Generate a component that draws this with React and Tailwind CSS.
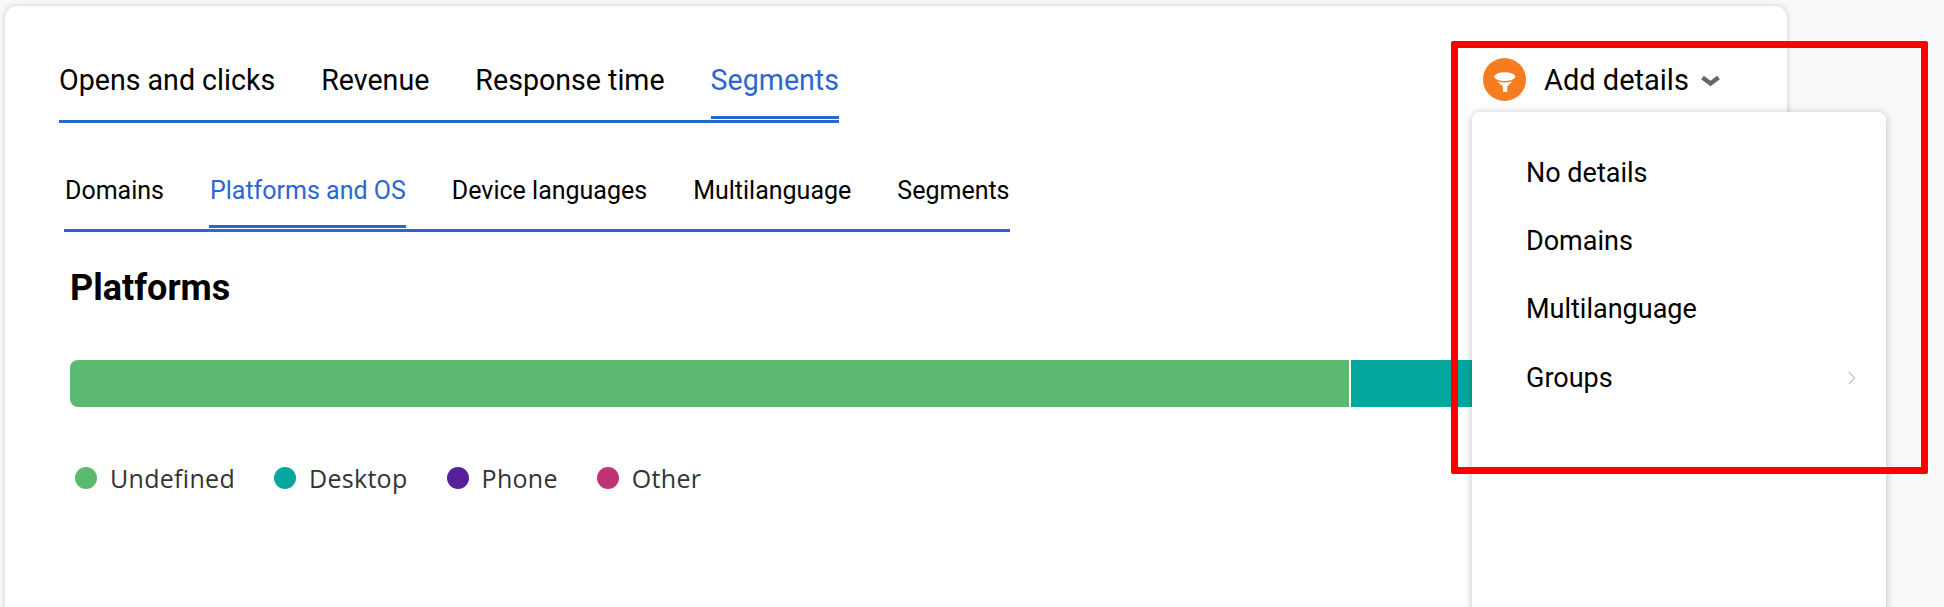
import React from 'react';
import { ChevronRight } from 'lucide-react';

const mainTabs = ['Opens and clicks', 'Revenue', 'Response time', 'Segments'];
const subTabs = ['Domains', 'Platforms and OS', 'Device languages', 'Multilanguage', 'Segments'];
const legend = [
  { label: 'Undefined', color: 'bg-[#5cb970]' },
  { label: 'Desktop', color: 'bg-[#04a79d]' },
  { label: 'Phone', color: 'bg-[#57209b]' },
  { label: 'Other', color: 'bg-[#c23373]' },
];
const menuItems = ['No details', 'Domains', 'Multilanguage', 'Groups'];

const FunnelIcon = () => (
  <svg width="43" height="43" viewBox="0 0 43 43" className="shrink-0">
    <circle cx="21.5" cy="21.5" r="21.5" fill="#f57c20" />
    <ellipse cx="21.8" cy="18.6" rx="10.5" ry="4.3" fill="#fff" />
    <path d="M14 23.2 Q21.8 25.8 29.6 23.2 L24.4 28.2 L24.2 34 L20 34 L19.8 28.2 Z" fill="#fff" />
  </svg>
);

const SmallChevron = () => (
  <svg width="19" height="12" viewBox="0 0 19 12" className="shrink-0">
    <path d="M1.5 2.5 L9.5 8.5 L17.5 2.5" fill="none" stroke="#666" strokeWidth="4.5" />
  </svg>
);

export default function App() {
  return (
    <div className="relative h-[607px] overflow-hidden bg-[#f9f9f9] font-['Roboto',sans-serif] text-black">
      <div className="relative ml-[5px] mt-[6px] h-[640px] w-[1782px] rounded-xl bg-white pl-[54px] pt-[51px] shadow-[0_0_6px_rgba(0,0,0,0.18)]">
        {/* Main tabs */}
        <nav className="inline-flex gap-[46px] border-b-[3px] border-[#2b66d1] text-[28.6px] leading-[46px]">
          {mainTabs.map((tab) => (
            <div key={tab} className={tab === 'Segments' ? 'relative h-[63px] text-[#2b66d1]' : 'h-[63px]'}>
              {tab}
              {tab === 'Segments' && <div className="absolute inset-x-0 bottom-[1px] h-[3px] bg-[#2b66d1]" />}
            </div>
          ))}
        </nav>

        {/* Sub tabs */}
        <div className="mt-[45px] pl-[5px]">
          <nav className="inline-flex gap-[45px] border-b-[3px] border-[#2b66d1] text-[25px] leading-[46px]">
            {subTabs.map((tab, i) => (
              <div key={i} className={i === 1 ? 'relative h-[61px] text-[#2b66d1]' : 'h-[61px]'}>
                <span className="pl-px">{tab}</span>
                {i === 1 && <div className="absolute inset-x-0 bottom-[1px] h-[3px] bg-[#2b66d1]" />}
              </div>
            ))}
          </nav>
        </div>

        {/* Platforms */}
        <h2 className="mt-[33px] pl-[11px] text-[36px] font-bold leading-[46px]">Platforms</h2>

        <div className="ml-[11px] mt-[49px] flex h-[47px] w-[1600px] gap-[2px] overflow-hidden rounded-l-lg">
          <div className="w-[1279px] bg-[#5cb970]" />
          <div className="flex-1 bg-[#04a79d]" />
        </div>

        <div className="ml-[16px] mt-[59px] flex items-center font-['Open_Sans',sans-serif] text-[25px] leading-[24px] tracking-[0.3px] text-[#333]">
          {legend.map((item) => (
            <div key={item.label} className="mr-[39px] flex items-center gap-[13px]">
              <span className={`h-[22px] w-[22px] rounded-full ${item.color}`} />
              <span>{item.label}</span>
            </div>
          ))}
        </div>

        {/* Add details dropdown trigger */}
        <div className="absolute left-[1478px] top-[52px] flex items-center">
          <FunnelIcon />
          <span className="ml-[18px] text-[29px] leading-[36px]">Add details</span>
          <span className="ml-[12px] mt-[3px]"><SmallChevron /></span>
        </div>

        {/* Dropdown menu */}
        <div className="absolute left-[1467px] top-[106px] h-[540px] w-[414px] rounded-lg bg-white pl-[54px] pr-[23px] pt-[27px] text-[27px] shadow-[0_1px_8px_rgba(0,0,0,0.25)]">
          {menuItems.map((item) => (
            <div key={item} className="flex h-[68.3px] items-center justify-between">
              <span>{item}</span>
              {item === 'Groups' && <ChevronRight className="h-[22px] w-[22px] text-[#c8c8c8]" strokeWidth={1.5} />}
            </div>
          ))}
        </div>
      </div>

      {/* Red highlight rectangle */}
      <div className="absolute left-[1451px] top-[41px] h-[433px] w-[477px] rounded-[2px] border-[7px] border-[#ff0000]" />
    </div>
  );
}
